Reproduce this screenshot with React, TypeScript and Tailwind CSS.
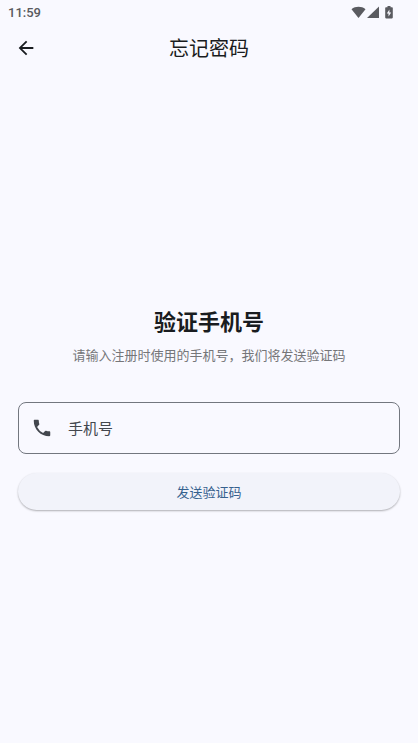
import React from 'react';

function StatusBar() {
  return (
    <div className="flex h-6 items-center justify-between pl-2 pr-[25px] text-[#5a5b60]">
      <span className="font-[Roboto] text-[13px] leading-none font-medium">11:59</span>
      <div className="flex items-center">
        <svg width="15" height="13" viewBox="0 0 15 13" fill="currentColor"><path d="M7.5 12 0.5 3.2C4.5 0 10.5 0 14.5 3.2z" /></svg>
        <svg className="ml-px" width="12" height="13" viewBox="0 0 12 13" fill="currentColor"><path d="M0 12 12 0.5V12z" /></svg>
        <svg className="ml-1.5" width="8" height="13" viewBox="0 0 8 13" fill="currentColor"><path fillRule="evenodd" d="M2.5 0h3v1.2H7c.5 0 .8.3.8.8v9.6c0 .5-.3.8-.8.8H1c-.5 0-.8-.3-.8-.8V2c0-.5.3-.8.8-.8h1.5zM4.4 3.5 1.8 7.4h1.7v3L6.2 6.4H4.4z" /></svg>
      </div>
    </div>
  );
}

export default function App() {
  return (
    <main className="flex h-[743px] w-full flex-col bg-[#f9f9ff] font-['Noto_Sans_CJK_SC',sans-serif] text-[#191c20]">
      <StatusBar />
      <header className="grid h-12 grid-cols-[52px_1fr_52px] items-center">
        <button aria-label="返回" className="flex justify-center">
          <svg width="22" height="22" viewBox="0 0 24 24" fill="currentColor"><path d="M20 11H7.83l5.59-5.59L12 4l-8 8 8 8 1.41-1.41L7.83 13H20z" /></svg>
        </button>
        <h1 className="text-center text-[20px] leading-7">忘记密码</h1>
      </header>
      <section className="flex flex-col px-[18px] pt-[232px]">
        <h2 className="text-center text-[22px] leading-8 font-bold">验证手机号</h2>
        <p className="mt-[9px] text-center text-[13px] leading-5 text-[#757679]">请输入注册时使用的手机号，我们将发送验证码</p>
        <label className="mt-[37px] flex h-[52px] items-center rounded-[8px] border border-[#73777f] pl-3 text-[15px] text-[#43474e]">
          <svg width="22" height="22" viewBox="0 0 24 24" fill="currentColor"><path d="M6.62 10.79a15.15 15.15 0 0 0 6.59 6.59l2.2-2.2a1 1 0 0 1 1.02-.24c1.12.37 2.33.57 3.57.57.55 0 1 .45 1 1V20c0 .55-.45 1-1 1C10.61 21 3 13.39 3 4c0-.55.45-1 1-1h3.5c.55 0 1 .45 1 1 0 1.25.2 2.45.57 3.57.11.35.03.74-.25 1.02z" /></svg>
          <span className="ml-[15px]">手机号</span>
        </label>
        <button className="mt-[19px] h-[37px] rounded-full bg-[#f2f3fa] text-[13px] text-[#36618e] shadow-[0_1px_2px_rgba(0,0,0,0.3)]">发送验证码</button>
      </section>
    </main>
  );
}
